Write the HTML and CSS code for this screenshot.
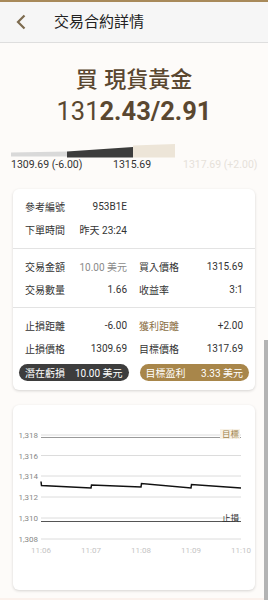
FILE: index.html
```html
<!DOCTYPE html>
<html lang="zh-Hant">
<head>
<meta charset="utf-8">
<title>交易合約詳情</title>
<link rel="stylesheet" href="styles.css">
</head>
<body>
<div class="topline"></div>
<header class="header">
  <svg class="back" width="12" height="16" viewBox="0 0 12 16"><path d="M9.5 1.5 L3 8 L9.5 14.5" fill="none" stroke="#7d6b4f" stroke-width="2.2"/></svg>
  <div class="title">交易合約詳情</div>
</header>
<main class="page">
  <div class="hero-title">買 現貨黃金</div>
  <div class="hero-price">131<b>2.43/2.91</b></div>
  <svg class="bar" width="268" height="32" viewBox="0 128 268 32">
    <polygon points="11,153.5 67,152.5 67,157.5 11,157.5" fill="#d9d9d9"/>
    <polygon points="67,152.5 133,148 133,158.5 67,158.5" fill="#3c3c3c"/>
    <polygon points="133,146.5 175,145 175,158.5 133,158.5" fill="#ede5d8"/>
  </svg>
  <div class="bar-labels">
    <span class="bl bl1">1309.69 (-6.00)</span>
    <span class="bl bl2">1315.69</span>
    <span class="bl bl3">1317.69 (+2.00)</span>
  </div>

  <section class="card">
    <div class="sec sec1">
      <div class="cell"><span class="lbl">參考編號</span><span class="val">953B1E</span></div>
      <div class="cell"></div>
      <div class="cell"><span class="lbl">下單時間</span><span class="val">昨天 23:24</span></div>
      <div class="cell"></div>
    </div>
    <div class="sec">
      <div class="cell"><span class="lbl">交易金額</span><span class="val muted">10.00 美元</span></div>
      <div class="cell"><span class="lbl">買入價格</span><span class="val">1315.69</span></div>
      <div class="cell"><span class="lbl">交易數量</span><span class="val">1.66</span></div>
      <div class="cell"><span class="lbl">收益率</span><span class="val">3:1</span></div>
    </div>
    <div class="sec sec3">
      <div class="cell"><span class="lbl">止損距離</span><span class="val">-6.00</span></div>
      <div class="cell"><span class="lbl gold">獲利距離</span><span class="val">+2.00</span></div>
      <div class="cell"><span class="lbl">止損價格</span><span class="val">1309.69</span></div>
      <div class="cell"><span class="lbl">目標價格</span><span class="val">1317.69</span></div>
    </div>
    <div class="pills">
      <div class="pill pill-dark"><span>潛在虧損</span><span>10.00 美元</span></div>
      <div class="pill pill-gold"><span>目標盈利</span><span>3.33 美元</span></div>
    </div>
  </section>

  <section class="card chart-card">
    <svg class="chart" width="242" height="185" viewBox="0 0 242 185">
      <g stroke="#dcdcdc" stroke-width="1">
        <line x1="28" y1="30" x2="228" y2="30"/>
        <line x1="28" y1="50.5" x2="228" y2="50.5"/>
        <line x1="28" y1="71" x2="228" y2="71"/>
        <line x1="28" y1="92" x2="228" y2="92"/>
        <line x1="28" y1="113" x2="228" y2="113"/>
        <line x1="28" y1="134" x2="228" y2="134"/>
      </g>
      <g class="ylab" text-anchor="end">
        <text x="25" y="33">1,318</text>
        <text x="25" y="53.5">1,316</text>
        <text x="25" y="74">1,314</text>
        <text x="25" y="95">1,312</text>
        <text x="25" y="116">1,310</text>
        <text x="25" y="137">1,308</text>
      </g>
      <line x1="28" y1="32.5" x2="228" y2="32.5" stroke="#9a9a9a" stroke-width="1"/>
      <rect x="207" y="24" width="20" height="10" fill="#f7f1e6"/>
      <text class="tag tag-gold" x="226" y="31.5" text-anchor="end">目標</text>
      <line x1="28" y1="116.5" x2="228" y2="116.5" stroke="#555" stroke-width="1"/>
      <text class="tag tag-dark" x="226" y="115.5" text-anchor="end">止損</text>
      <polyline points="28,76.5 28.5,80.5 78,83 78.5,80 128,82 128.5,78.5 178,83 178.5,79.5 228,83" fill="none" stroke="#111" stroke-width="1.5"/>
      <g class="xlab" text-anchor="middle">
        <text x="28" y="148">11:06</text>
        <text x="78" y="148">11:07</text>
        <text x="128" y="148">11:08</text>
        <text x="178" y="148">11:09</text>
        <text x="228" y="148">11:10</text>
      </g>
    </svg>
  </section>
  <div class="bottom-strip"></div>
</main>
<div class="scrollbar"></div>
</body>
</html>
```

FILE: styles.css
```css
* { box-sizing: border-box; }
html, body { margin: 0; padding: 0; }
body {
  width: 268px;
  height: 600px;
  overflow: hidden;
  background: #fdfbf9;
  font-family: Roboto, "Noto Sans CJK TC", "Noto Sans", sans-serif;
  color: #333;
}
.topline { height: 2px; background: #a88a5a; }
.header {
  height: 41px;
  display: flex;
  align-items: center;
  background: #f6f6f6;
  border-bottom: 1px solid #dedede;
}
.back { margin-left: 15px; display: block; }
.title { margin-left: 27px; font-size: 15px; color: #222; line-height: 20px; }
.page { display: flex; flex-direction: column; }
.hero-title {
  margin-top: 22px;
  text-align: center;
  font-size: 22px;
  line-height: 30px;
  font-weight: 500;
  color: #5a4730;
  word-spacing: 1px;
}
.hero-price {
  text-align: center;
  font-size: 25.5px;
  line-height: 32px;
  color: #5a4730;
}
.hero-price b { font-weight: 700; }
.bar { display: block; }
.bar-labels {
  display: flex;
  padding-left: 11px;
  font-size: 10.5px;
  line-height: 12px;
  height: 12px;
}
.bl { white-space: nowrap; color: #333; }
.bl1 { width: 102px; }
.bl2 { width: 70px; }
.bl3 { color: #e6e1da; }
.card {
  margin: 18px 13px 0;
  background: #fff;
  border-radius: 6px;
  box-shadow: 0 1px 3px rgba(0,0,0,0.16);
}
.sec {
  display: grid;
  grid-template-columns: 102px 104px;
  column-gap: 12px;
  padding: 6px 12px 6.5px;
  border-bottom: 1px solid #e3e3e3;
}
.sec3 { border-bottom: none; padding-bottom: 4px; }
.cell {
  display: flex;
  justify-content: space-between;
  align-items: center;
  height: 23px;
  font-size: 10px;
}
.lbl { color: #333; }
.lbl.gold { color: #8b6f45; }
.val { color: #333; }
.val.muted { color: #8a8a8a; }
.pills {
  display: flex;
  gap: 11px;
  padding: 0 6px 9px;
}
.pill {
  flex: 1;
  height: 17px;
  border-radius: 9px;
  display: flex;
  justify-content: space-between;
  align-items: center;
  padding: 0 6px;
  font-size: 10px;
  color: #fff;
}
.pill-dark { background: #3d3d3d; }
.pill-gold { background: #a8864a; }
.chart-card { margin-top: 15px; height: 185px; }
.chart { display: block; }
.ylab text { font-size: 8px; fill: #888; font-family: Roboto, sans-serif; }
.xlab text { font-size: 8px; fill: #c4c4c4; font-family: Roboto, sans-serif; }
.tag { font-size: 8.5px; font-family: "Noto Sans CJK TC", sans-serif; }
.tag-gold { fill: #a0844c; }
.tag-dark { fill: #333; }
.bottom-strip { margin-top: 8px; height: 6px; background: #fbf1ec; }
.scrollbar {
  position: fixed;
  right: 0;
  top: 340px;
  width: 4px;
  height: 260px;
  background: #b3b3b3;
}
```
